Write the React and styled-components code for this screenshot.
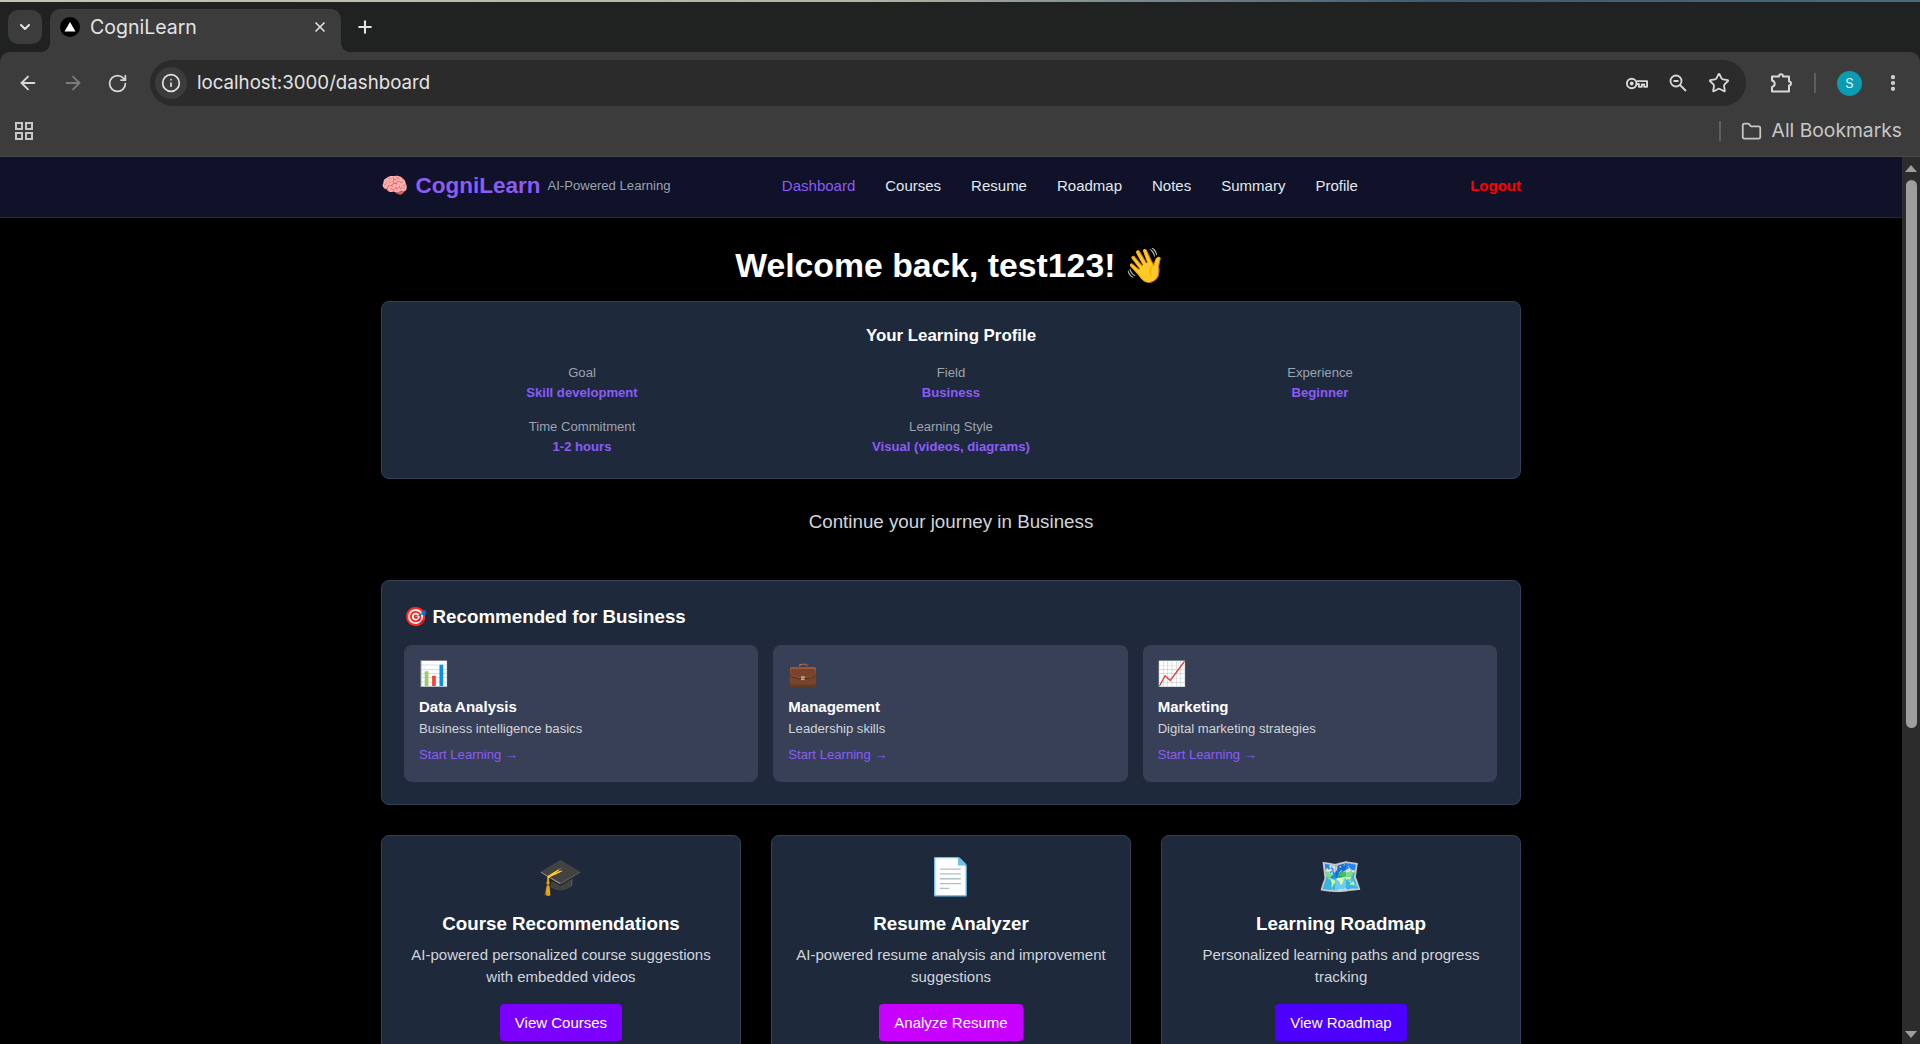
import React from 'react'
import styled, { createGlobalStyle } from 'styled-components'
import {
    ArrowLeft,
    ArrowRight,
    ChevronDown,
    Folder,
    Info,
    MoreVertical,
    Plus,
    RotateCw,
    Star,
    X,
} from 'lucide-react'

const navLinks = ['Dashboard', 'Courses', 'Resume', 'Roadmap', 'Notes', 'Summary', 'Profile']

const profileItems = [
    { label: 'Goal', value: 'Skill development' },
    { label: 'Field', value: 'Business' },
    { label: 'Experience', value: 'Beginner' },
    { label: 'Time Commitment', value: '1-2 hours' },
    { label: 'Learning Style', value: 'Visual (videos, diagrams)' },
]

const recommended = [
    { icon: '📊', title: 'Data Analysis', text: 'Business intelligence basics' },
    { icon: '💼', title: 'Management', text: 'Leadership skills' },
    { icon: '📈', title: 'Marketing', text: 'Digital marketing strategies' },
]

const features = [
    {
        icon: '🎓',
        title: 'Course Recommendations',
        text: 'AI-powered personalized course suggestions with embedded videos',
        action: 'View Courses',
        color: '#7c00ff',
    },
    {
        icon: '📄',
        title: 'Resume Analyzer',
        text: 'AI-powered resume analysis and improvement suggestions',
        action: 'Analyze Resume',
        color: '#c800ff',
    },
    {
        icon: '🗺️',
        title: 'Learning Roadmap',
        text: 'Personalized learning paths and progress tracking',
        action: 'View Roadmap',
        color: '#4d00ff',
    },
]

const PasswordKey = () => (
    <svg width="23" height="23" viewBox="0 0 24 24" fill="none" stroke="currentColor" strokeWidth="2">
        <circle cx="7" cy="12" r="5" />
        <circle cx="7" cy="12" r="1" fill="currentColor" />
        <path d="M12 9.5h11v6h-3v-2.5h-2.5v2.5h-3v-3H12" strokeLinejoin="round" />
    </svg>
)

const PageZoom = () => (
    <svg width="22" height="22" viewBox="0 0 22 22" fill="none" stroke="currentColor" strokeWidth="1.8">
        <circle cx="9" cy="9" r="5.5" />
        <path d="M6.500 9h5M13 13l6 6" />
    </svg>
)

const ExtensionPuzzle = () => (
    <svg width="24" height="24" viewBox="0 0 24 24" fill="none" stroke="#d8d8d8" strokeWidth="2" strokeLinejoin="round">
        <path d="M3 5.500h7c0-3 4-3 4 0h6v5c2.600 0 2.600 4 0 4v6H3v-4.500c3.600-1 3.600-5.500 0-6.500z" />
    </svg>
)

const AppsGrid = () => (
    <svg width="18" height="18" viewBox="0 0 18 18" fill="none" stroke="#c7c7c7" strokeWidth="2">
        <rect x="1" y="1" width="6" height="6" />
        <rect x="11" y="1" width="6" height="6" />
        <rect x="1" y="11" width="6" height="6" />
        <rect x="11" y="11" width="6" height="6" />
    </svg>
)

const App = () => {
    return (
        <Window>
            <GlobalStyle />
            <TabStrip>
                <TabSearch>
                    <ChevronDown size={16} strokeWidth={3} />
                </TabSearch>
                <Tab>
                    <svg width="20" height="20" viewBox="0 0 20 20">
                        <circle cx="10" cy="10" r="10" fill="#000" />
                        <path d="M10 5l5.500 9.500h-11z" fill="#fff" />
                    </svg>
                    <TabTitle>CogniLearn</TabTitle>
                    <X size={16} strokeWidth={2.5} color="#e3e3e3" />
                </Tab>
                <NewTab>
                    <Plus size={20} strokeWidth={2.5} />
                </NewTab>
            </TabStrip>
            <Toolbar>
                <NavButtons>
                    <ArrowLeft size={22} color="#d8d8d8" />
                    <ArrowRight size={22} color="#7c7c7c" />
                    <RotateCw size={21} color="#d8d8d8" />
                </NavButtons>
                <Omnibox>
                    <SiteInfo>
                        <Info size={20} color="#e3e3e3" />
                    </SiteInfo>
                    <Url>localhost:3000/dashboard</Url>
                    <OmniIcons>
                        <PasswordKey />
                        <PageZoom />
                        <Star size={22} />
                    </OmniIcons>
                </Omnibox>
                <ToolbarEnd>
                    <ExtensionPuzzle />
                    <ToolbarDivider />
                    <Avatar>S</Avatar>
                    <MoreVertical size={20} color="#d8d8d8" strokeWidth={3} />
                </ToolbarEnd>
            </Toolbar>
            <Bookmarks>
                <AppsGrid />
                <BookmarksEnd>
                    <BookmarkDivider />
                    <Folder size={21} color="#c7c7c7" />
                    <BookmarkLabel>All Bookmarks</BookmarkLabel>
                </BookmarksEnd>
            </Bookmarks>
            <Viewport>
                <Page>
                    <NavBar>
                        <NavInner>
                            <Brand>
                                <BrandEmoji>🧠</BrandEmoji>
                                <BrandName>CogniLearn</BrandName>
                                <BrandTag>AI-Powered Learning</BrandTag>
                            </Brand>
                            <NavLinks>
                                {navLinks.map((link, i) => (
                                    <NavLink key={link} $active={i === 0}>
                                        {link}
                                    </NavLink>
                                ))}
                            </NavLinks>
                            <Logout>Logout</Logout>
                        </NavInner>
                    </NavBar>
                    <Main>
                        <Welcome>
                            Welcome back, test123! <Emoji>👋</Emoji>
                        </Welcome>
                        <ProfileCard>
                            <ProfileTitle>Your Learning Profile</ProfileTitle>
                            <ProfileGrid>
                                {profileItems.map((item) => (
                                    <div key={item.label}>
                                        <ProfileLabel>{item.label}</ProfileLabel>
                                        <ProfileValue>{item.value}</ProfileValue>
                                    </div>
                                ))}
                            </ProfileGrid>
                        </ProfileCard>
                        <Journey>Continue your journey in Business</Journey>
                        <RecommendCard>
                            <RecommendTitle>
                                <Emoji>🎯</Emoji> Recommended for Business
                            </RecommendTitle>
                            <RecommendGrid>
                                {recommended.map((item) => (
                                    <RecommendItem key={item.title}>
                                        <RecommendIcon>{item.icon}</RecommendIcon>
                                        <RecommendName>{item.title}</RecommendName>
                                        <RecommendText>{item.text}</RecommendText>
                                        <StartLink>Start Learning →</StartLink>
                                    </RecommendItem>
                                ))}
                            </RecommendGrid>
                        </RecommendCard>
                        <FeatureGrid>
                            {features.map((feature) => (
                                <FeatureCard key={feature.title}>
                                    <FeatureIcon>{feature.icon}</FeatureIcon>
                                    <FeatureTitle>{feature.title}</FeatureTitle>
                                    <FeatureText>{feature.text}</FeatureText>
                                    <FeatureButton $color={feature.color}>{feature.action}</FeatureButton>
                                </FeatureCard>
                            ))}
                        </FeatureGrid>
                    </Main>
                </Page>
                <Scrollbar>
                    <ScrollArrow $up />
                    <ScrollThumb />
                    <ScrollTrack />
                    <ScrollArrow />
                </Scrollbar>
            </Viewport>
        </Window>
    )
}

const GlobalStyle = createGlobalStyle`
    html, body {
        background: #000;
        height: 100%;
        margin: 0;
        overflow: hidden;
    }

    * {
        box-sizing: border-box;
    }
`

const chromeFont = `Inter, "Noto Sans", sans-serif`
const pageFont = `"Liberation Sans", Arial, sans-serif`
const emojiFont = `"Noto Color Emoji", "Liberation Sans", sans-serif`

const Window = styled('div')`
    background: #202221;
    display: flex;
    flex-direction: column;
    font-family: ${pageFont};
    height: 1044px;
    overflow: hidden;
`

const TabStrip = styled('div')`
    align-items: flex-start;
    background: #202221;
    border-image: linear-gradient(90deg, #c4c4b4 0%, #b4b4a6 45%, #3c5a70 75%, #4a6a80 100%) 1;
    border-style: solid;
    border-width: 2px 0 0;
    display: flex;
    flex: 0 0 52px;
    padding: 7px 0 0 8px;
`

const TabSearch = styled('div')`
    align-items: center;
    background: #3c3c3c;
    border-radius: 10px;
    color: #e3e3e3;
    display: flex;
    height: 34px;
    justify-content: center;
    margin: 1px 8px 0 0;
    width: 34px;
`

/* The flared bottom corners are the only thing laid over the tab strip. */
const Tab = styled('div')`
    align-items: center;
    background: #3c3c3c;
    border-radius: 10px 10px 0 0;
    display: flex;
    gap: 10px;
    height: 43px;
    padding: 0 13px 8px 10px;
    position: relative;
    width: 291px;

    &::before,
    &::after {
        bottom: 0;
        content: '';
        height: 10px;
        position: absolute;
        width: 10px;
    }

    &::before {
        background: radial-gradient(circle at 0 0, transparent 10px, #3c3c3c 10.5px);
        left: -10px;
    }

    &::after {
        background: radial-gradient(circle at 100% 0, transparent 10px, #3c3c3c 10.5px);
        right: -10px;
    }
`

const TabTitle = styled('span')`
    color: #e3e3e3;
    flex: 1;
    font-family: ${chromeFont};
    font-size: 19.5px;
`

const NewTab = styled('div')`
    align-items: center;
    color: #e3e3e3;
    display: flex;
    height: 34px;
    justify-content: center;
    margin: 1px 0 0 7px;
    width: 34px;
`

const Toolbar = styled('div')`
    align-items: center;
    background: #3c3c3c;
    border-radius: 10px 10px 0 0;
    display: flex;
    flex: 0 0 62px;
    gap: 21px;
    padding: 0 17px 0 17px;
`

const NavButtons = styled('div')`
    align-items: center;
    display: flex;
    gap: 23px;
    margin-right: 1px;
`

const Omnibox = styled('div')`
    align-items: center;
    background: #2b2b2b;
    border-radius: 23px;
    display: flex;
    flex: 1;
    height: 46px;
    padding: 0 16px 0 5px;
`

const SiteInfo = styled('div')`
    align-items: center;
    background: #3c3c3c;
    border-radius: 50%;
    display: flex;
    height: 32px;
    justify-content: center;
    width: 32px;
`

const Url = styled('span')`
    color: #e3e3e3;
    flex: 1;
    font-family: ${chromeFont};
    font-size: 18.7px;
    margin-left: 10px;
    padding-bottom: 2px;
`

const OmniIcons = styled('div')`
    align-items: center;
    color: #d8d8d8;
    display: flex;
    gap: 19px;
`

const ToolbarEnd = styled('div')`
    align-items: center;
    display: flex;
    gap: 21px;
    padding-left: 2px;
`

const ToolbarDivider = styled('div')`
    background: #5e5e5e;
    height: 20px;
    width: 2px;
`

const Avatar = styled('div')`
    align-items: center;
    background: #0a9cb2;
    border-radius: 50%;
    color: #e8fbff;
    display: flex;
    font-family: ${chromeFont};
    font-size: 13px;
    height: 25px;
    justify-content: center;
    width: 25px;
`

const Bookmarks = styled('div')`
    align-items: center;
    background: #3c3c3c;
    border-bottom: 1px solid #4a4a4a;
    display: flex;
    flex: 0 0 43px;
    justify-content: space-between;
    padding: 0 18px 8px 15px;
`

const BookmarksEnd = styled('div')`
    align-items: center;
    display: flex;
    gap: 10px;
`

const BookmarkDivider = styled('div')`
    background: #5e5e5e;
    height: 20px;
    margin-right: 10px;
    width: 2px;
`

const BookmarkLabel = styled('span')`
    color: #c7c7c7;
    font-family: ${chromeFont};
    font-size: 19.3px;
    padding-bottom: 2px;
`

const Viewport = styled('div')`
    background: #000;
    display: flex;
    flex: 1;
    min-height: 0;
`

const Page = styled('div')`
    flex: 1;
    min-width: 0;
    overflow: hidden;
`

const Scrollbar = styled('div')`
    align-items: center;
    background: #2c2c2c;
    display: flex;
    flex: 0 0 18px;
    flex-direction: column;
    padding: 8px 0 6px;
`

const ScrollArrow = styled('div')`
    border-left: 6px solid transparent;
    border-right: 6px solid transparent;
    ${({ $up }) => ($up ? 'border-bottom' : 'border-top')}: 7px solid #9e9e9e;
    flex: none;
`

const ScrollThumb = styled('div')`
    background: #9e9e9e;
    border-radius: 6px;
    flex: 0 0 548px;
    margin-top: 8px;
    width: 11px;
`

const ScrollTrack = styled('div')`
    flex: 1;
`

const NavBar = styled('nav')`
    background: #0f1228;
    border-bottom: 1px solid #1e293b;
    height: 61px;
`

const NavInner = styled('div')`
    align-items: center;
    display: flex;
    height: 100%;
    justify-content: space-between;
    margin: 0 auto;
    padding-bottom: 3px;
    width: 1140px;
`

const Brand = styled('div')`
    align-items: center;
    display: flex;
`

const Emoji = styled('span')`
    font-family: ${emojiFont};
`

const BrandEmoji = styled(Emoji)`
    font-size: 22px;
`

const BrandName = styled('span')`
    color: #8b5cf6;
    font-size: 22.5px;
    font-weight: 700;
    margin-left: 7px;
`

const BrandTag = styled('span')`
    color: #9ca3af;
    font-size: 13.125px;
    margin-left: 7px;
`

const NavLinks = styled('div')`
    display: flex;
    gap: 30px;
    margin-right: 1px;
`

const NavLink = styled('a')`
    color: ${({ $active }) => ($active ? '#8b5cf6' : '#e2e8f0')};
    font-size: 15px;
`

const Logout = styled('a')`
    color: #ff0000;
    font-size: 15px;
    font-weight: 700;
`

const Main = styled('main')`
    margin: 0 auto;
    width: 1140px;
`

const Welcome = styled('h1')`
    color: #fff;
    font-size: 33.75px;
    font-weight: 700;
    line-height: 40px;
    margin: 27px 0 0;
    text-align: center;
`

const Card = styled('section')`
    background: #1e293b;
    border: 1px solid #334155;
    border-radius: 8px;
`

const ProfileCard = styled(Card)`
    height: 178px;
    margin-top: 15px;
    padding: 23px;
    text-align: center;
`

const ProfileTitle = styled('h2')`
    color: #fff;
    font-size: 16.875px;
    font-weight: 700;
    line-height: 22px;
    margin: 0 0 16px;
`

const ProfileGrid = styled('div')`
    display: grid;
    gap: 15px;
    grid-template-columns: repeat(3, 1fr);
`

const ProfileLabel = styled('div')`
    color: #9ca3af;
    font-size: 13.125px;
    line-height: 19.5px;
`

const ProfileValue = styled('div')`
    color: #8b5cf6;
    font-size: 13.125px;
    font-weight: 700;
    line-height: 19.5px;
`

const Journey = styled('p')`
    color: #d1d5db;
    font-size: 18.75px;
    line-height: 28px;
    margin: 29px 0 0;
    text-align: center;
`

const RecommendCard = styled(Card)`
    height: 225px;
    margin-top: 44px;
    padding: 23px 23px 23px 22px;
`

const RecommendTitle = styled('h2')`
    color: #fff;
    font-size: 18.75px;
    font-weight: 700;
    line-height: 26px;
    margin: 0 0 15px;
`

const RecommendGrid = styled('div')`
    display: grid;
    gap: 15px;
    grid-template-columns: repeat(3, 1fr);
`

const RecommendItem = styled('article')`
    background: #374056;
    border-radius: 8px;
    height: 137px;
    padding: 15px;
`

const RecommendIcon = styled('div')`
    font-family: ${emojiFont};
    font-size: 24px;
    line-height: 28px;
`

const RecommendName = styled('h3')`
    color: #fff;
    font-size: 15px;
    font-weight: 700;
    line-height: 20px;
    margin: 9px 0 0;
`

const RecommendText = styled('p')`
    color: #d1d5db;
    font-size: 13.125px;
    line-height: 20px;
    margin: 2px 0 0;
`

const StartLink = styled('a')`
    color: #8b5cf6;
    display: block;
    font-size: 13.125px;
    line-height: 20px;
    margin-top: 6px;
`

const FeatureGrid = styled('div')`
    display: grid;
    gap: 30px;
    grid-template-columns: repeat(3, 1fr);
    margin-top: 30px;
`

const FeatureCard = styled(Card)`
    height: 260px;
    padding: 19px 24px;
    text-align: center;
`

const FeatureIcon = styled('div')`
    font-family: ${emojiFont};
    font-size: 36px;
    line-height: 44px;
`

const FeatureTitle = styled('h3')`
    color: #fff;
    font-size: 18.75px;
    font-weight: 700;
    line-height: 26px;
    margin: 12px 0 0;
`

const FeatureText = styled('p')`
    color: #d1d5db;
    font-size: 15px;
    line-height: 22px;
    margin: 7px 0 0;
`

const FeatureButton = styled('button')`
    background: ${({ $color }) => $color};
    border: 0;
    border-radius: 4px;
    color: #fff;
    font-family: ${pageFont};
    font-size: 15px;
    height: 37px;
    margin-top: 16px;
    padding: 0 15px;
`

export default App
